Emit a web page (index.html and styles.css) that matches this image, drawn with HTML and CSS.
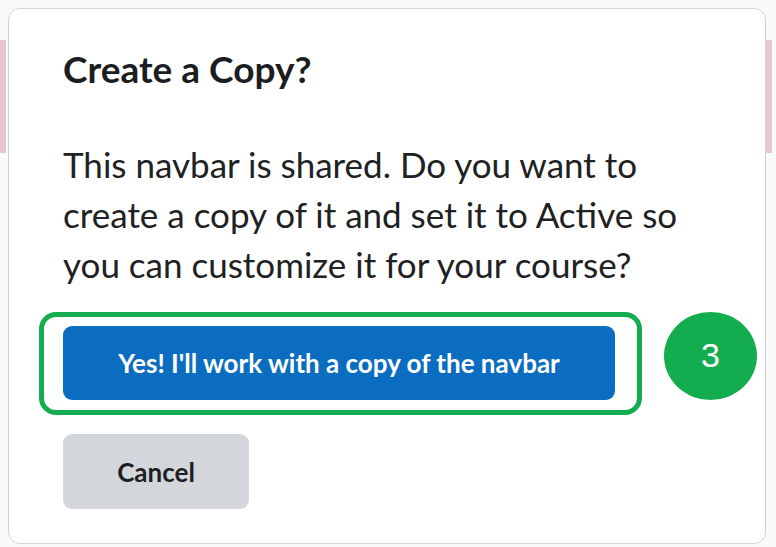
FILE: index.html
```html
<!DOCTYPE html>
<html lang="en">
<head>
<meta charset="utf-8">
<title>Create a Copy?</title>
<link rel="stylesheet" href="styles.css">
</head>
<body>
  <div class="backdrop">
    <section class="dialog" role="dialog" aria-labelledby="dlg-title">
      <h1 class="dialog-title" id="dlg-title">Create a Copy?</h1>
      <p class="dialog-text">This navbar is shared. Do you want to create a copy of it and set it to Active so you can customize it for your course?</p>
      <div class="primary-row">
        <div class="highlight">
          <button class="btn btn-primary" type="button">Yes! I'll work with a copy of the navbar</button>
        </div>
        <div class="step-badge">3</div>
      </div>
      <button class="btn btn-secondary" type="button">Cancel</button>
    </section>
  </div>
</body>
</html>
```

FILE: styles.css
```css
html, body {
  margin: 0;
  padding: 0;
}

body {
  width: 776px;
  height: 547px;
  overflow: hidden;
  font-family: Lato, "Open Sans", sans-serif;
  color: #202122;
  background-color: #f9fafb;
  background-image:
    linear-gradient(#e8c6cb, #e8c6cb),
    linear-gradient(#e8c6cb, #e8c6cb);
  background-repeat: no-repeat;
  background-size: 6px 113px, 6px 113px;
  background-position: 0 40px, 766px 40px;
}

.backdrop {
  padding: 8px 10px 3px 8px;
}

.dialog {
  box-sizing: border-box;
  width: 758px;
  height: 536px;
  background: #ffffff;
  border: 1px solid #cfd3d7;
  border-radius: 12px;
  padding: 40px 20px 0 54px;
}

.dialog-title {
  margin: 0;
  font-size: 37px;
  line-height: 40px;
  font-weight: 700;
  color: #1c1d1f;
}

.dialog-text {
  margin: 50px 0 0 0;
  width: 640px;
  font-size: 35px;
  line-height: 50px;
  font-weight: 400;
}

.primary-row {
  display: flex;
  align-items: flex-start;
  gap: 22px;
  margin: 23px 0 0 -24px;
}

.highlight {
  flex-shrink: 0;
  border: 5px solid #13ad4f;
  border-radius: 17px;
  padding: 9px 22px 10px 19px;
}

.btn {
  display: flex;
  align-items: center;
  justify-content: center;
  box-sizing: border-box;
  border: none;
  border-radius: 9px;
  font-family: Lato, "Open Sans", sans-serif;
  font-weight: 700;
  font-size: 26px;
  padding: 0;
  margin: 0;
}

.btn-primary {
  width: 552px;
  height: 74px;
  background: #0b6dbf;
  color: #ffffff;
}

.btn-secondary {
  width: 186px;
  height: 75px;
  margin-top: 19px;
  background: #d3d7dc;
  color: #1e1f21;
}

.step-badge {
  flex-shrink: 0;
  width: 93px;
  height: 88px;
  border-radius: 50%;
  background: #13ad4f;
  color: #ffffff;
  display: flex;
  align-items: center;
  justify-content: center;
  font-family: "Liberation Sans", Arial, sans-serif;
  font-size: 34px;
  line-height: 1;
  padding-bottom: 2px;
  box-sizing: border-box;
}
```
